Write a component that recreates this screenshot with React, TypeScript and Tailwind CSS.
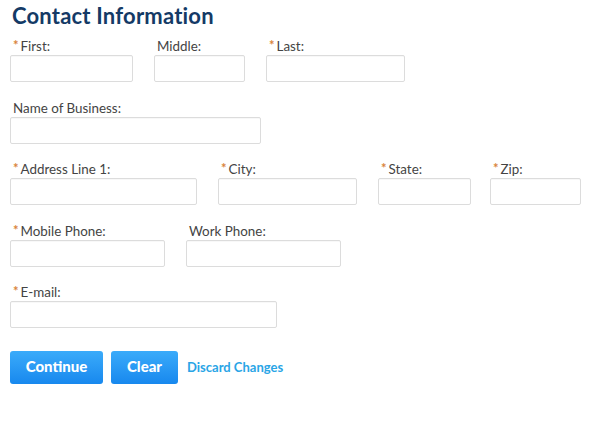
import React from "react";

type FieldProps = {
  label: string;
  required?: boolean;
  width: string;
};

function Field({ label, required, width }: FieldProps) {
  return (
    <div className="flex flex-col">
      <label className="mb-px flex h-4 items-center pl-[3px] text-[13.4px] leading-4 text-[#444]">
        {required ? <span className="mr-[2px] -mt-[2px] text-[13px] font-bold text-[#d9833a]">*</span> : null}
        {label}
      </label>
      <input
        type="text"
        className={`h-[27px] ${width} rounded-[2px] border border-[#dcdcdc] bg-white shadow-[inset_0_1px_1px_rgba(0,0,0,0.03)] outline-none`}
      />
    </div>
  );
}

export default function App() {
  return (
    <div className="min-h-[434px] w-[608px] bg-white px-[10px] font-['Lato','Noto_Sans',sans-serif]">
      <h1 className="pt-[3px] pl-[2px] text-[22px] font-bold leading-[25px] tracking-[0.2px] text-[#143a66]">Contact Information</h1>

      <div className="mt-[10px] flex gap-[21px]">
        <Field label="First:" required width="w-[123px]" />
        <Field label="Middle:" width="w-[91px]" />
        <Field label="Last:" required width="w-[139px]" />
      </div>

      <div className="mt-[18px]">
        <Field label="Name of Business:" width="w-[251px]" />
      </div>

      <div className="mt-[17px] flex gap-[21px]">
        <Field label="Address Line 1:" required width="w-[187px]" />
        <Field label="City:" required width="w-[139px]" />
        <Field label="State:" required width="w-[93px]" />
        <div className="-ml-[2px]">
          <Field label="Zip:" required width="w-[91px]" />
        </div>
      </div>

      <div className="mt-[18px] flex gap-[21px]">
        <Field label="Mobile Phone:" required width="w-[155px]" />
        <Field label="Work Phone:" width="w-[155px]" />
      </div>

      <div className="mt-[17px]">
        <Field label="E-mail:" required width="w-[267px]" />
      </div>

      <div className="mt-[23px] flex items-center">
        <button
          type="button"
          className="h-[33px] w-[93px] rounded-[3px] bg-gradient-to-b from-[#3aabfa] to-[#1788ee] pb-[2px] text-[15px] font-black text-white"
        >
          Continue
        </button>
        <button
          type="button"
          className="ml-[8px] h-[33px] w-[67px] rounded-[3px] bg-gradient-to-b from-[#3aabfa] to-[#1788ee] pb-[2px] text-[15px] font-black text-white"
        >
          Clear
        </button>
        <a href="#" className="ml-[9px] text-[13px] font-bold text-[#2aa5e6]">
          Discard Changes
        </a>
      </div>
    </div>
  );
}
